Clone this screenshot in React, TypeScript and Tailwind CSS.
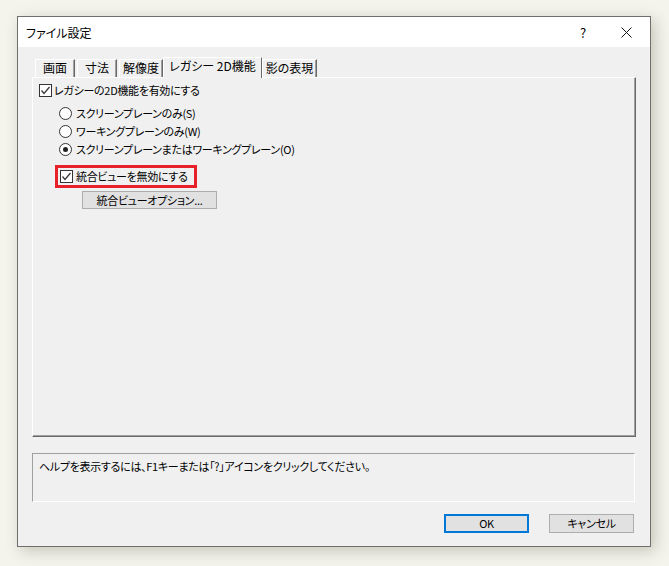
import React from 'react'

const font = "font-['Noto_Sans_CJK_JP','Noto_Sans',sans-serif] [font-feature-settings:'palt']"

function CheckBox({ checked }: { checked: boolean }) {
  return (
    <span className="flex size-[13px] shrink-0 items-center justify-center border border-[#333] bg-white">
      {checked && (
        <svg width="11" height="11" viewBox="0 0 11 11" fill="none">
          <path d="M1.5 5.5 L4 8.5 L9.5 2" stroke="#3a3a3a" strokeWidth="1.3" />
        </svg>
      )}
    </span>
  )
}

function Radio({ checked }: { checked: boolean }) {
  return (
    <span className="flex size-[13px] shrink-0 items-center justify-center rounded-full border border-[#333] bg-white">
      {checked && <span className="size-[5px] rounded-full bg-[#222]" />}
    </span>
  )
}

function Tab({ label, active, className }: { label: string; active?: boolean; className: string }) {
  return (
    <div
      className={`flex items-center justify-center border-t border-l border-white bg-[#f0f0f0] text-[12px] tracking-normal ${
        active
          ? 'relative z-10 -mb-px h-[21px] border-r border-r-[#696969] pb-[4px]'
          : 'h-[18px] border-r border-r-[#696969] pb-[2px] shadow-[inset_-1px_0_0_#a0a0a0]'
      } ${className}`}
    >
      {label}
    </div>
  )
}

export default function App() {
  const radios = [
    ['スクリーンプレーンのみ(S)', false],
    ['ワーキングプレーンのみ(W)', false],
    ['スクリーンプレーンまたはワーキングプレーン(O)', true],
  ] as const

  return (
    <div className={`h-[566px] w-[669px] bg-[#f4f4ec] pt-[16px] pl-[17px] text-[11px] leading-none tracking-[-0.3px] text-black ${font}`}>
      <div className="flex h-[531px] w-[634px] flex-col border border-[#6f6f6f] bg-[#f0f0f0] shadow-[4px_4px_14px_rgba(60,60,40,0.25)]">
        {/* Title bar */}
        <div className="flex h-[30px] items-center bg-white pl-[8px]">
          <span className="flex-1 pt-[1px] text-[12px] tracking-normal">ファイル設定</span>
          <span className="w-[12px] text-center text-[13px]">?</span>
          <span className="ml-[31px] mr-[18px] flex size-[12px] items-center justify-center">
            <svg width="11" height="11" viewBox="0 0 11 11" fill="none">
              <path d="M0.5 0.5 L10.5 10.5 M10.5 0.5 L0.5 10.5" stroke="#111" strokeWidth="1" />
            </svg>
          </span>
        </div>

        {/* Body */}
        <div className="flex flex-1 flex-col px-[14px] pt-[9px]">
          <div className="flex h-[21px] items-end">
            <Tab label="画面" className="ml-[3px] w-[40px]" />
            <Tab label="寸法" className="ml-[2px] w-[40px]" />
            <Tab label="解像度" className="ml-[2px] w-[44px]" />
            <Tab label="レガシー 2D機能" active className="w-[99px]" />
            <Tab label="影の表現" className="w-[55px]" />
          </div>

          <div className="flex h-[360px] flex-col border-t border-l border-white border-r border-b border-r-[#696969] border-b-[#696969] pt-[6px] pl-[6px] shadow-[inset_-1px_-1px_0_#a0a0a0]">
            <label className="flex h-[13px] items-center gap-[2px]">
              <CheckBox checked />
              <span>レガシーの2D機能を有効にする</span>
            </label>

            <div className="mt-[9px] flex flex-col gap-[4px] pl-[20px]">
              {radios.map(([label, on]) => (
                <label key={label} className="flex h-[14px] items-center gap-[4px]">
                  <Radio checked={on} />
                  <span>{label}</span>
                </label>
              ))}
            </div>

            <div className="mt-[9px] ml-[16px] flex h-[23px] w-[142px] items-center gap-[3px] whitespace-nowrap border-[3px] border-[#e8202a] pl-[2px]">
              <CheckBox checked />
              <span>統合ビューを無効にする</span>
            </div>

            <button
              type="button"
              className="mt-[3px] ml-[43px] h-[18px] w-[135px] border border-[#adadad] bg-[#e1e1e1] leading-none"
            >
              統合ビューオプション...
            </button>
          </div>

          {/* Help box */}
          <div className="mt-[16px] h-[49px] w-[603px] border-t border-l border-[#a0a0a0] border-r border-b border-r-white border-b-white px-[6px] pt-[7px]">
            ヘルプを表示するには、F1キーまたは「?」アイコンをクリックしてください。
          </div>

          <div className="mt-[12px] flex justify-end gap-[20px] pr-[2px]">
            <button type="button" className="h-[19px] w-[85px] border-2 border-[#0078d7] bg-[#e1e1e1]">
              OK
            </button>
            <button type="button" className="h-[19px] w-[85px] border border-[#adadad] bg-[#e1e1e1]">
              キャンセル
            </button>
          </div>
        </div>
      </div>
    </div>
  )
}
